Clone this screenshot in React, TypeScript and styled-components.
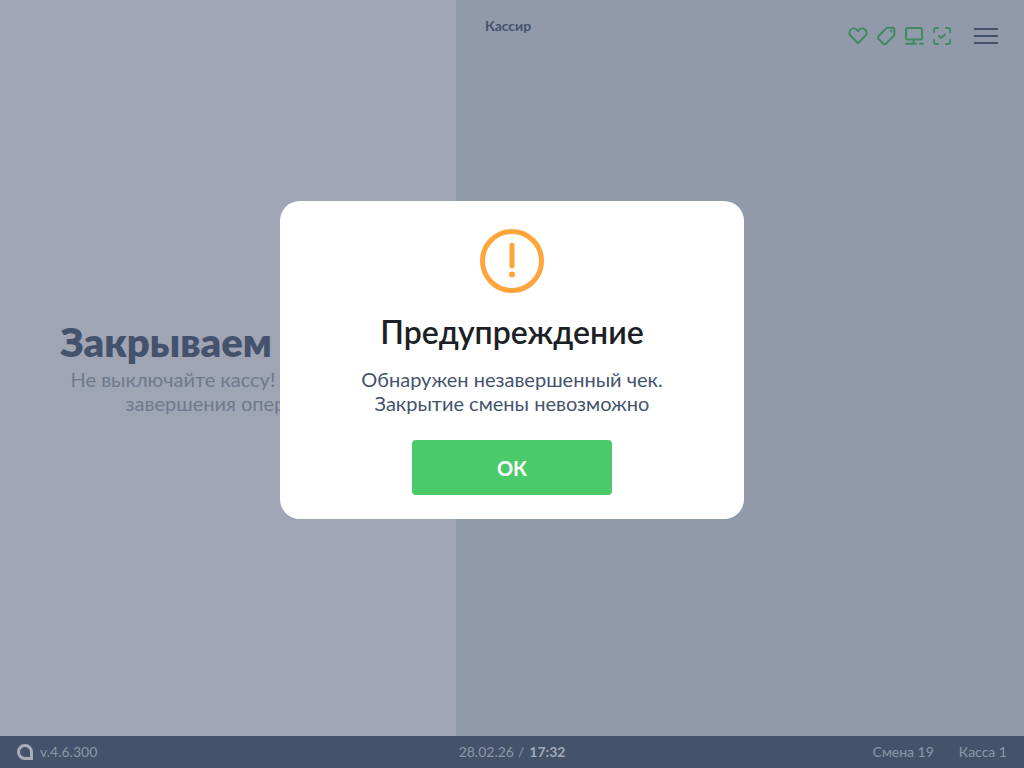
import React from "react";
import styled, { createGlobalStyle } from "styled-components";

const GlobalStyle = createGlobalStyle`
  html, body {
    margin: 0;
    padding: 0;
    height: 100%;
    font-family: Lato, "Noto Sans", sans-serif;
  }
  #root {
    height: 100%;
  }
`;

const App = () => {
  return (
    <Screen>
      <GlobalStyle />
      <Main>
        <LeftPanel>
          <Title>Закрываем смену</Title>
          <Subtitle>
            Не выключайте кассу! Дождитесь
            <br />
            завершения операции
          </Subtitle>
        </LeftPanel>
        <RightPanel>
          <CashierLabel>Кассир</CashierLabel>
          <TopIcons>
            <IconGroup>
              <GreenIcon viewBox="0 0 20 20">
                <path d="M10 17.2 2.600 9.800C.9 8 1 5.100 2.900 3.500 4.700 2 7.400 2.300 9 4.100l1 1.100 1-1.100c1.600-1.800 4.300-2.100 6.100-.6 1.900 1.600 2 4.500.3 6.300L10 17.200Z" />
              </GreenIcon>
              <GreenIcon viewBox="0 0 20 20">
                <path d="M11.500 1.800h5c1 0 1.800.8 1.800 1.800v5c0 .5-.2 1-.6 1.300l-7.800 7.800c-.7.7-1.800.7-2.500 0l-5-5c-.7-.7-.7-1.800 0-2.500l7.800-7.800c.3-.4.800-.6 1.300-.6Z" />
                <circle cx="15" cy="5" r=".4" />
              </GreenIcon>
              <GreenIcon viewBox="0 0 20 20">
                <rect x="2" y="2" width="16" height="11.500" rx="1.500" />
                <path d="M9.500 13.500v4M2 17.800h10M16 17.800h3" />
              </GreenIcon>
              <GreenIcon viewBox="0 0 20 20">
                <path d="M6 2H4C2.900 2 2 2.900 2 4v2M14 2h2c1.100 0 2 .9 2 2v2M6 18H4c-1.100 0-2-.9-2-2v-2M14 18h2c1.100 0 2-.9 2-2v-2M7 10l2 2 4-3.500" />
              </GreenIcon>
            </IconGroup>
            <Burger>
              <BurgerLine />
              <BurgerLine />
              <BurgerLine />
            </Burger>
          </TopIcons>
        </RightPanel>
      </Main>
      <Overlay>
        <Dialog>
          <WarningIcon viewBox="0 0 64 64">
            <circle cx="32" cy="32" r="29.500" />
            <path d="M32 16v21" />
            <circle className="dot" cx="32" cy="45.500" r="3" />
          </WarningIcon>
          <DialogTitle>Предупреждение</DialogTitle>
          <DialogText>
            Обнаружен незавершенный чек.
            <br />
            Закрытие смены невозможно
          </DialogText>
          <OkButton>ОК</OkButton>
        </Dialog>
      </Overlay>
      <StatusBar>
        <StatusLeft>
          <Logo viewBox="0 0 16 16">
            <path d="M8 1.500a6.500 6.500 0 1 0 0 13h6.500V8A6.500 6.500 0 0 0 8 1.500Z" />
          </Logo>
          <span>v.4.6.300</span>
        </StatusLeft>
        <StatusCenter>
          28.02.26<DateSlash>/</DateSlash>
          <b>17:32</b>
        </StatusCenter>
        <StatusRight>
          <span>Смена 19</span>
          <span>Касса 1</span>
        </StatusRight>
      </StatusBar>
    </Screen>
  );
};

export default App;

const Screen = styled.div`
  width: 1024px;
  height: 768px;
  display: flex;
  flex-direction: column;
  overflow: hidden;
`;

const Main = styled.div`
  flex: 1;
  display: flex;
`;

const LeftPanel = styled.div`
  width: 456px;
  background: #f9f8fc;
  display: flex;
  flex-direction: column;
  align-items: center;
  padding-top: 317px;
  box-sizing: border-box;
`;

const Title = styled.h1`
  margin: 0;
  font-size: 40px;
  line-height: 50px;
  font-weight: 800;
  color: #45526c;
  white-space: nowrap;
`;

const Subtitle = styled.p`
  margin: 0;
  font-size: 20px;
  line-height: 24px;
  color: #98a0b4;
  text-align: center;
  white-space: nowrap;
`;

const RightPanel = styled.div`
  flex: 1;
  background: #dce3ea;
  display: flex;
  justify-content: space-between;
  align-items: flex-start;
  padding: 16px 26px 0 29px;
`;

const CashierLabel = styled.div`
  font-size: 14px;
  line-height: 20px;
  font-weight: 700;
  color: #45526c;
`;

const TopIcons = styled.div`
  display: flex;
  align-items: center;
  gap: 22px;
  padding-top: 10px;
`;

const IconGroup = styled.div`
  display: flex;
  gap: 8px;
`;

const GreenIcon = styled.svg`
  width: 20px;
  height: 20px;
  fill: none;
  stroke: #39c254;
  stroke-width: 2;
  stroke-linecap: round;
  stroke-linejoin: round;
`;

const Burger = styled.div`
  width: 24px;
  display: flex;
  flex-direction: column;
  gap: 5px;
`;

const BurgerLine = styled.div`
  height: 2px;
  background: #45526c;
`;

const Overlay = styled.div`
  position: fixed;
  inset: 0;
  background: rgba(69, 82, 108, 0.5);
  display: flex;
  align-items: flex-start;
  justify-content: center;
  padding-top: 201px;
  box-sizing: border-box;
`;

const Dialog = styled.div`
  width: 464px;
  height: 318px;
  background: #fff;
  border-radius: 20px;
  display: flex;
  flex-direction: column;
  align-items: center;
  padding-top: 28px;
  box-sizing: border-box;
`;

const WarningIcon = styled.svg`
  width: 64px;
  height: 64px;
  fill: none;
  stroke: #ffa53c;
  stroke-width: 5;
  stroke-linecap: round;

  .dot {
    fill: #ffa53c;
    stroke: none;
  }
`;

const DialogTitle = styled.h2`
  margin: 18px 0 0;
  font-size: 32px;
  line-height: 42px;
  font-weight: 600;
  color: #1c1f26;
`;

const DialogText = styled.p`
  margin: 14px 0 0;
  font-size: 20px;
  line-height: 24px;
  color: #45526c;
  text-align: center;
`;

const OkButton = styled.button`
  margin-top: 25px;
  width: 200px;
  height: 55px;
  border: none;
  border-radius: 4px;
  background: #4bca69;
  color: #fff;
  font-family: inherit;
  font-size: 20px;
  font-weight: 700;
`;

const StatusBar = styled.div`
  position: relative;
  height: 32px;
  background: #45526c;
  display: grid;
  grid-template-columns: 1fr auto 1fr;
  align-items: center;
  padding: 0 17px 1px;
  box-sizing: border-box;
  font-size: 14px;
  color: #8e97a8;
`;

const StatusLeft = styled.div`
  display: flex;
  align-items: center;
  gap: 7px;
`;

const Logo = styled.svg`
  width: 16px;
  height: 16px;
  fill: none;
  stroke: #a7aeba;
  stroke-width: 3;
`;

const StatusCenter = styled.div`
  b {
    font-weight: 700;
    color: #a2a9b6;
  }
`;

const DateSlash = styled.span`
  margin: 0 5px 0 4px;
`;

const StatusRight = styled.div`
  display: flex;
  justify-content: flex-end;
  gap: 25px;
`;
